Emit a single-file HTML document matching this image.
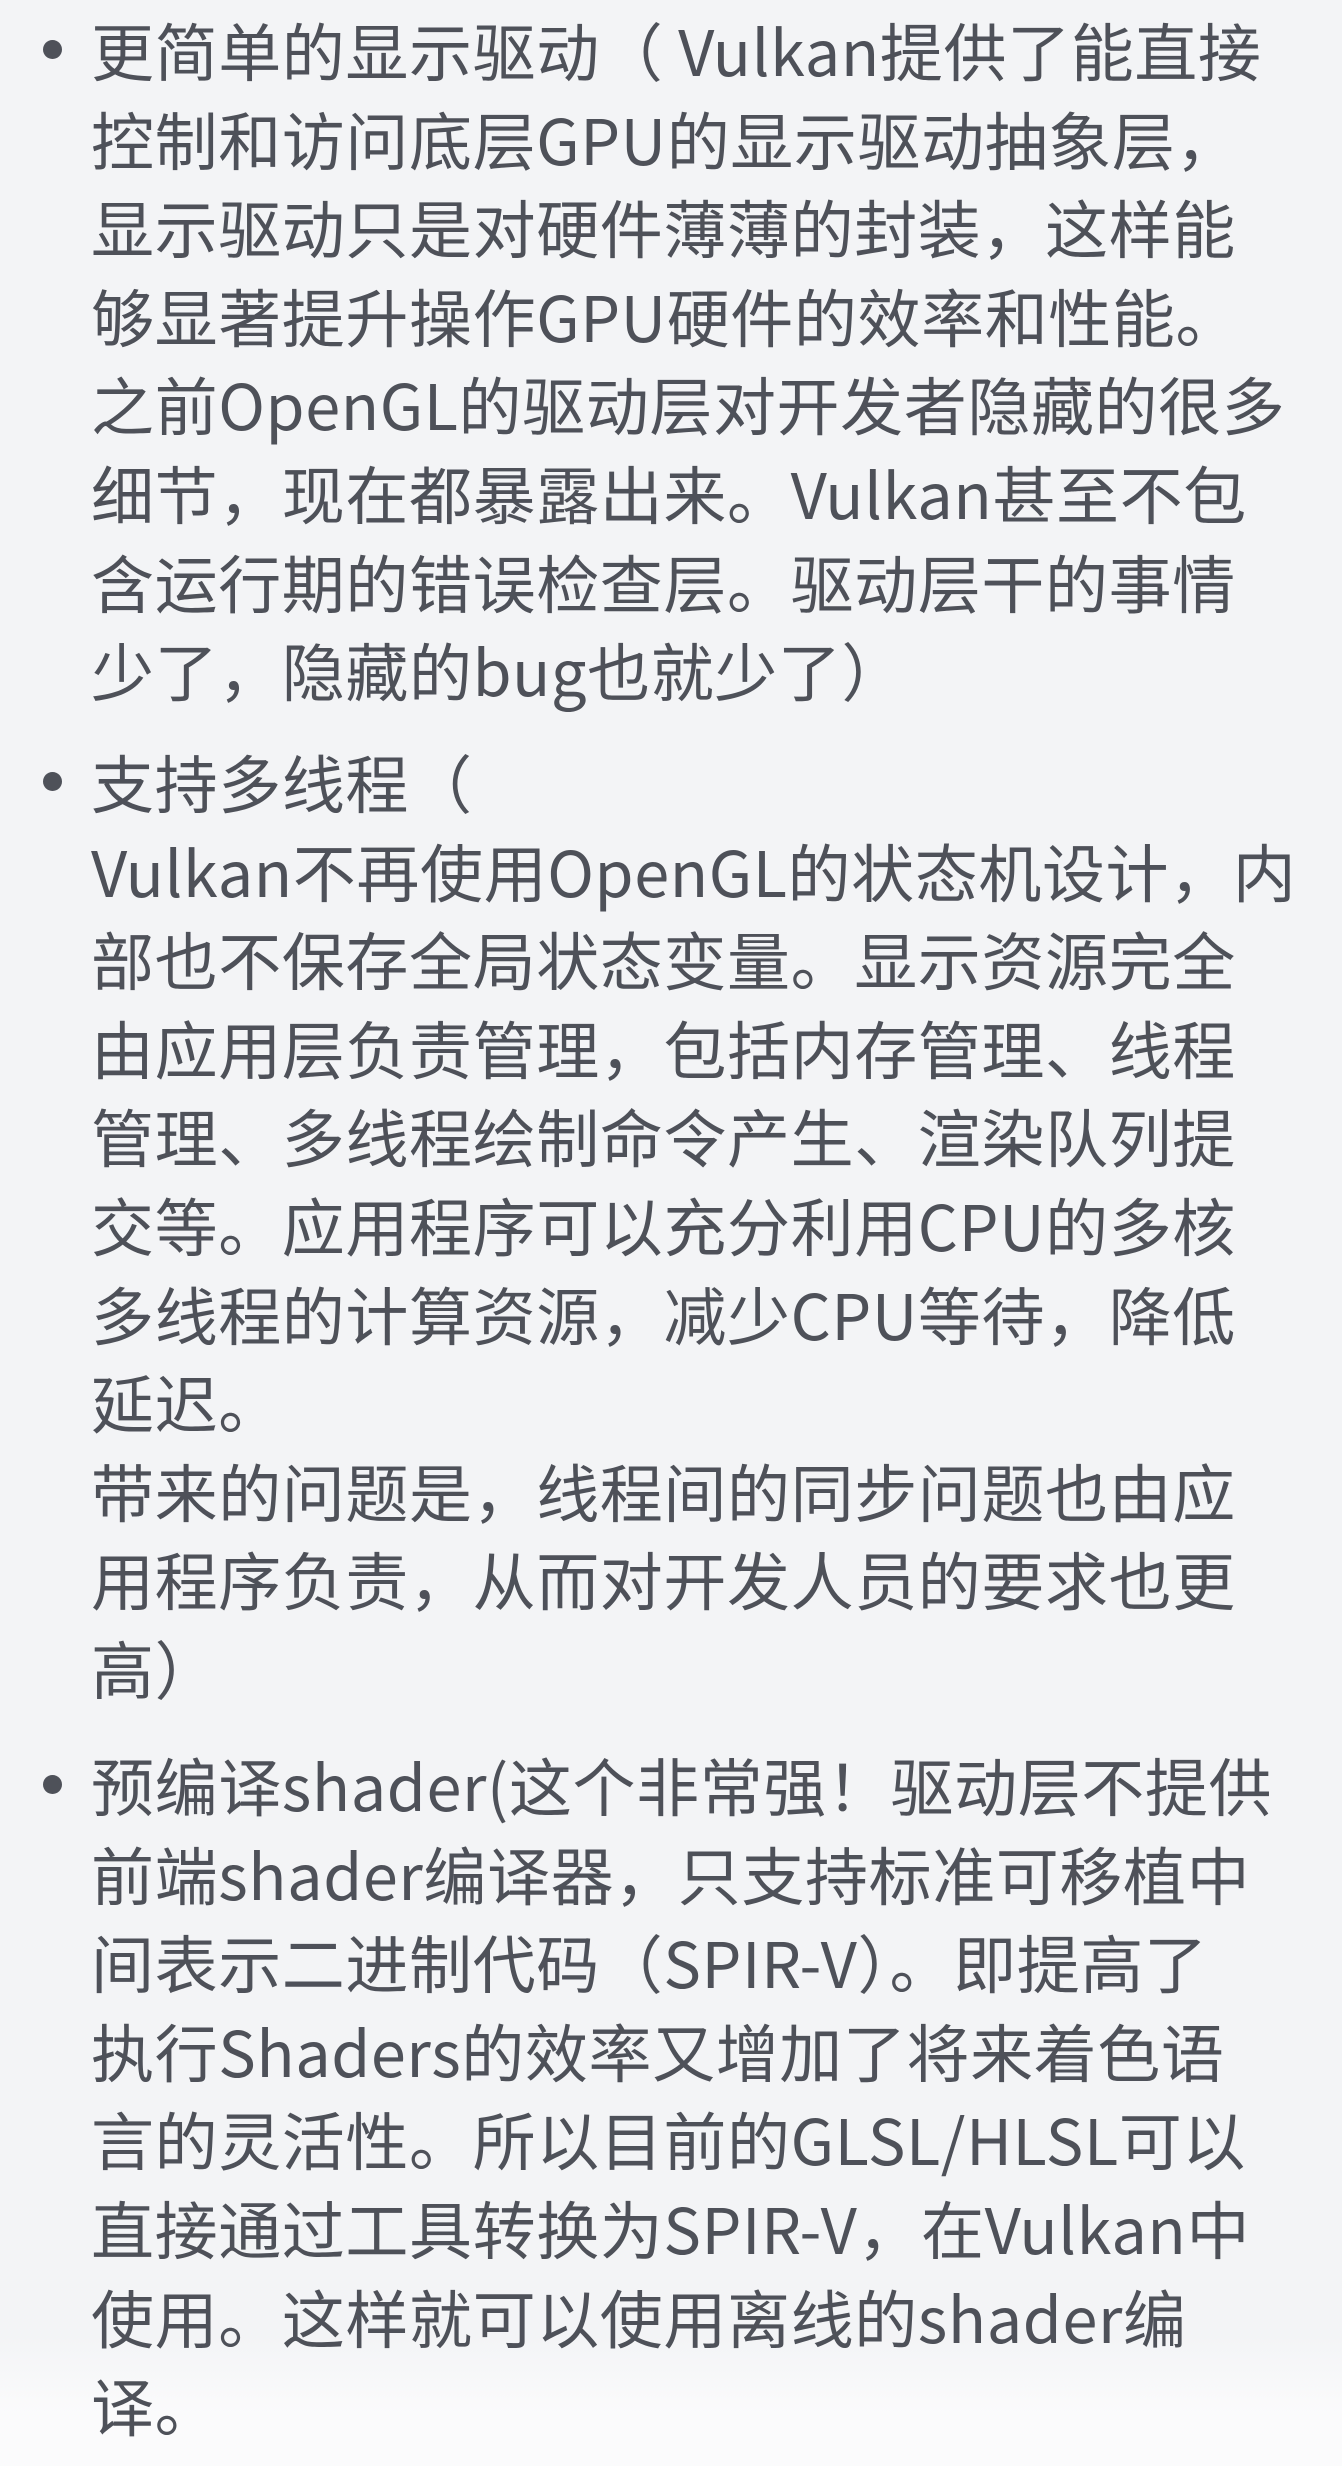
<!DOCTYPE html>
<html><head><meta charset="utf-8">
<style>
html,body{margin:0;padding:0}
body{width:1342px;height:2466px;overflow:hidden;background:#f3f4f6;color:#4e5159;
font-family:"Noto Sans CJK SC","Liberation Sans",sans-serif;font-size:63px;line-height:88.6px;letter-spacing:0.6px;position:relative}
.b{position:absolute;left:91px;white-space:nowrap}
.b::before{content:"";position:absolute;left:-48px;top:34px;width:19px;height:19px;border-radius:50%;background:#4e5159}
.fade{position:absolute;left:0;right:0;bottom:0;height:130px;background:linear-gradient(#f3f4f600,#fbfbfc 60%)}
</style></head><body>
<div class="fade"></div>
<div class="b" style="top:6px">更简单的显示驱动（ Vulkan提供了能直接<br>控制和访问底层GPU的显示驱动抽象层，<br>显示驱动只是对硬件薄薄的封装，这样能<br>够显著提升操作GPU硬件的效率和性能。<br>之前OpenGL的驱动层对开发者隐藏的很多<br>细节，现在都暴露出来。Vulkan甚至不包<br>含运行期的错误检查层。驱动层干的事情<br>少了，隐藏的bug也就少了）</div>
<div class="b" style="top:738px">支持多线程（<br>Vulkan不再使用OpenGL的状态机设计，内<br>部也不保存全局状态变量。显示资源完全<br>由应用层负责管理，包括内存管理、线程<br>管理、多线程绘制命令产生、渲染队列提<br>交等。应用程序可以充分利用CPU的多核<br>多线程的计算资源，减少CPU等待，降低<br>延迟。<br>带来的问题是，线程间的同步问题也由应<br>用程序负责，从而对开发人员的要求也更<br>高）</div>
<div class="b" style="top:1741px">预编译shader(这个非常强！驱动层不提供<br>前端shader编译器，只支持标准可移植中<br>间表示二进制代码（SPIR-V）。即提高了<br>执行Shaders的效率又增加了将来着色语<br>言的灵活性。所以目前的GLSL/HLSL可以<br>直接通过工具转换为SPIR-V，在Vulkan中<br>使用。这样就可以使用离线的shader编<br>译。</div>
</body></html>
